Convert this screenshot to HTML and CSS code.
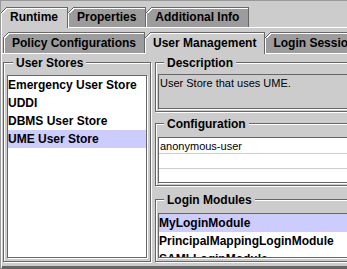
FILE: index.html
```html
<!DOCTYPE html>
<html lang="en">
<head>
    <meta charset="UTF-8">
    <title>User Management</title>
    <link rel="stylesheet" href="styles.css">
</head>
<body>
    <div class="frame">
        <div class="tabs tabs-main">
            <span class="tab selected">Runtime</span>
            <span class="tab">Properties</span>
            <span class="tab">Additional Info</span>
        </div>
        <div class="pane">
            <div class="tabs tabs-sub">
                <span class="tab">Policy Configurations</span>
                <span class="tab selected">User Management</span>
                <span class="tab">Login Session</span>
            </div>
            <div class="inner">
                <div class="group stores">
                    <div class="group-title">User Stores</div>
                    <ul class="list">
                        <li>Emergency User Store</li>
                        <li>UDDI</li>
                        <li>DBMS User Store</li>
                        <li class="sel">UME User Store</li>
                    </ul>
                </div>
                <div class="side">
                    <div class="group desc">
                        <div class="group-title">Description</div>
                        <div class="textbox">User Store that uses UME.</div>
                    </div>
                    <div class="group config">
                        <div class="group-title">Configuration</div>
                        <div class="table">
                            <div class="row">anonymous-user</div>
                            <div class="row"></div>
                            <div class="row"></div>
                        </div>
                    </div>
                    <div class="group modules">
                        <div class="group-title">Login Modules</div>
                        <ul class="list">
                            <li class="sel">MyLoginModule</li>
                            <li>PrincipalMappingLoginModule</li>
                            <li>SAMLLoginModule</li>
                        </ul>
                    </div>
                </div>
            </div>
        </div>
    </div>
</body>
</html>
```
FILE: styles.css
```css
body {
    margin: 0;
    background-color: #cccccc;
    color: #000;
    font: bold 12px "Liberation Sans", Arial, sans-serif;
    overflow: hidden;
}
.frame {
    width: 400px;
    height: 269px;
    box-sizing: border-box;
    border-top: 1px solid #999999;
    border-left: 1px solid #999999;
    display: flex;
    flex-direction: column;
}
/* tab rows */
.tabs {
    display: flex;
}
.tabs-main {
    padding-top: 6px;
}
.tabs-sub {
    padding-left: 1px;
}
.tab {
    position: relative;
    line-height: 19px;
    padding: 0 9px;
    background-color: #9c9c9c;
    border-top: 1px solid #666666;
    border-right: 1px solid #666666;
    box-shadow: inset 1px 1px 0 #ffffff;
    white-space: nowrap;
}
.tabs-sub .tab {
    line-height: 20px;
    padding: 0 8px;
}
.tabs-sub .tab:first-child {
    border-left: 1px solid #666666;
}
.tab::before {
    content: "";
    position: absolute;
    top: -1px;
    left: 0;
    width: 6px;
    height: 6px;
    background: linear-gradient(135deg, #cccccc 3.6px, #666666 3.6px, #666666 4.9px, #ffffff 4.9px, #ffffff 6px, transparent 6px);
}
.tabs-sub .tab:first-child::before {
    left: -1px;
}
.tab.selected {
    background-color: #cccccc;
    margin-bottom: -1px;
    padding-bottom: 1px;
    z-index: 1;
}
/* tab content panels */
.pane {
    flex: 1;
    min-height: 0;
    display: flex;
    flex-direction: column;
    padding-top: 4px;
    border-top: 1px solid #ffffff;
    border-left: 1px solid #ffffff;
    border-bottom: 2px solid #666666;
}
.inner {
    flex: 1;
    min-height: 0;
    display: flex;
    gap: 4px;
    padding: 8px 0 4px 1px;
    border-top: 1px solid #ffffff;
    border-bottom: 1px solid #666666;
}
/* titled groups */
.group {
    display: flex;
    flex-direction: column;
    border: 1px solid #666666;
    box-shadow: inset 1px 1px 0 #ffffff, 1px 1px 0 #ffffff;
}
.group-title {
    align-self: flex-start;
    margin: -7px 0 0 6px;
    padding: 0 3px;
    line-height: 14px;
    background-color: #cccccc;
}
.stores {
    width: 148px;
    flex-shrink: 0;
    box-sizing: border-box;
    padding: 0 3px 3px 3px;
}
.side {
    flex: 1;
    min-height: 0;
    display: flex;
    flex-direction: column;
}
.desc {
    padding: 0 2px 2px 2px;
}
.config {
    margin-top: 11px;
    padding: 0 2px 2px 2px;
}
.modules {
    flex: 1;
    min-height: 0;
    margin-top: 13px;
    padding: 0 2px 3px 2px;
}
.list {
    flex: 1;
    min-height: 0;
    margin: 5px 0 0 0;
    padding: 0;
    list-style: none;
    background-color: #ffffff;
    border: 1px solid #666666;
    box-shadow: 1px 1px 0 #ffffff;
    overflow: hidden;
}
.modules .list {
    margin-top: 6px;
}
.list li {
    line-height: 18px;
    white-space: nowrap;
}
.list .sel {
    background-color: #ccccff;
}
.textbox {
    height: 33px;
    margin-top: 4px;
    padding-left: 1px;
    border: 1px solid #666666;
    box-shadow: 1px 1px 0 #ffffff;
    font-weight: normal;
    font-size: 11px;
    line-height: 16px;
}
.table {
    height: 44px;
    margin-top: 6px;
    background-color: #ffffff;
    border: 1px solid #666666;
    box-shadow: 1px 1px 0 #ffffff;
    overflow: hidden;
}
.row {
    height: 14px;
    padding: 1px 0 0 1px;
    border-bottom: 1px solid #cccccc;
    font-weight: normal;
    font-size: 11px;
    line-height: 14px;
}
.row + .row {
    height: 14px;
    padding-top: 0;
}
```
